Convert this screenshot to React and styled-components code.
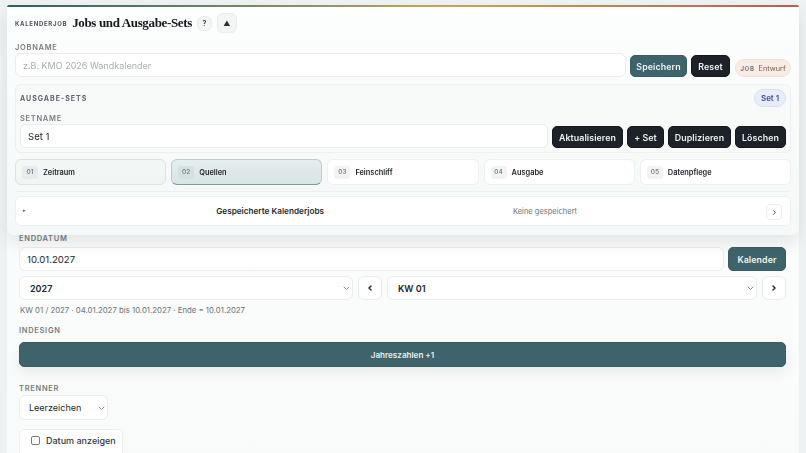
import React from "react";
import styled, { createGlobalStyle } from "styled-components";

const GlobalStyle = createGlobalStyle`
  * { box-sizing: border-box; }
  html, body { margin: 0; height: 100%; overflow: hidden; }
  body {
    background: #eff2f2;
    font-family: Inter, "Liberation Sans", sans-serif;
    color: #1c2126;
  }
`;

const Page = styled.div`
  width: 806px;
  height: 453px;
  overflow: hidden;
  padding: 5px 7px 0;
`;

const Card = styled.div`
  height: 448px;
  background: linear-gradient(180deg, #fdfefe 0%, #f9fafa 100%);
`;

const Panel = styled.header`
  position: sticky;
  top: 0;
  z-index: 2;
  height: 230px;
  padding: 8px 8px 0;
  background: linear-gradient(180deg, #fdfefe 0%, #f5f8f8 100%);
  border-top: 2px solid transparent;
  border-radius: 6px 6px 8px 8px;
  box-shadow: 0 8px 16px rgba(30, 45, 50, 0.1);
  &::before {
    content: "";
    position: absolute;
    top: -2px;
    left: 0;
    right: 0;
    height: 2px;
    border-radius: 2px 2px 0 0;
    background: linear-gradient(90deg, #2f5e66 0%, #8f9468 40%, #c9a45c 55%, #a9654f 100%);
  }
`;

const TitleRow = styled.div`
  display: flex;
  align-items: center;
  height: 20px;
  margin-top: -2px;
`;

const Eyebrow = styled.span`
  font-size: 6px;
  font-weight: 700;
  letter-spacing: 0.7px;
  color: #4a545b;
  margin-right: 5px;
`;

const Title = styled.h1`
  margin: 0 5px 0 0;
  font-family: "Liberation Serif", serif;
  font-size: 13px;
  font-weight: 700;
  letter-spacing: -0.35px;
  color: #14181c;
`;

const IconBtn = styled.button`
  display: flex;
  align-items: center;
  justify-content: center;
  width: ${(p) => p.$w}px;
  height: ${(p) => p.$h}px;
  margin-right: ${(p) => p.$mr || 0}px;
  padding: 0;
  flex: none;
  font-family: inherit;
  font-size: ${(p) => p.$fs || 8}px;
  font-weight: 600;
  color: #2a3036;
  background: ${(p) => p.$bg || "#f4f6f6"};
  border: 1px solid #e9ecec;
  border-radius: 6px;
`;

const FieldLabel = styled.div`
  font-size: 7.5px;
  font-weight: 600;
  letter-spacing: 0.7px;
  line-height: 9px;
  color: #767c81;
  margin-top: ${(p) => p.$mt || 0}px;
  margin-bottom: ${(p) => p.$mb ?? 3}px;
`;

const Row = styled.div`
  display: flex;
  align-items: ${(p) => p.$align || "flex-end"};
  gap: ${(p) => p.$gap || 4}px;
  margin-top: ${(p) => p.$mt || 0}px;
`;

const TextInput = styled.input`
  flex: 1;
  min-width: 0;
  height: 24px;
  padding: 0 7px;
  font-family: inherit;
  font-size: 9.6px;
  color: #22272c;
  background: #fff;
  border: 1px solid #eaeded;
  border-radius: 6px;
  outline: none;
  &::placeholder { color: #a8adb2; font-size: 9px; }
`;

const Button = styled.button`
  flex: none;
  width: ${(p) => p.$w}px;
  height: ${(p) => p.$h || 22}px;
  padding: 0;
  font-family: inherit;
  font-size: 8.8px;
  font-weight: 600;
  letter-spacing: 0.1px;
  color: #eef3f3;
  background: ${(p) => (p.$dark ? "#1c2228" : "#3e636a")};
  border: 1px solid ${(p) => (p.$dark ? "#15191d" : "#3a5d63")};
  border-radius: 5px;
`;

const JobPill = styled.div`
  display: flex;
  flex: none;
  align-items: center;
  justify-content: center;
  gap: 4px;
  width: 56px;
  height: 18px;
  margin-left: 1px;
  font-size: 7.3px;
  color: #7b5a4b;
  background: #f8ece4;
  border: 1px solid #f1e2d8;
  border-radius: 9px;
`;

const JobTag = styled.span`
  font-size: 6px;
  font-weight: 700;
  letter-spacing: 0.7px;
  color: #74797d;
`;

const SetBox = styled.section`
  height: 69px;
  margin-top: 7px;
  padding: 4px 4px 0;
  background: #f8fafa;
  border: 1px solid #edf0f0;
  border-radius: 6px;
`;

const SetHead = styled.div`
  display: flex;
  align-items: center;
  justify-content: space-between;
  height: 18px;
  margin-bottom: 7px;
`;

const SetTitle = styled.div`
  font-size: 7px;
  font-weight: 700;
  letter-spacing: 1px;
  color: #5d646a;
`;

const SetPill = styled.div`
  display: flex;
  align-items: center;
  justify-content: center;
  width: 32px;
  height: 18px;
  font-size: 8px;
  font-weight: 600;
  color: #3c4fa0;
  background: #e7edf9;
  border: 1px solid #d9e1f1;
  border-radius: 9px;
`;

const Tabs = styled.nav`
  display: grid;
  grid-template-columns: repeat(5, 1fr);
  gap: 5px;
  margin-top: 6px;
  padding-bottom: 6px;
  border-bottom: 1px solid #edf0f0;
`;

const Tab = styled.div`
  display: flex;
  align-items: center;
  gap: 5px;
  height: 26px;
  padding: 0 6px;
  font-size: 7.4px;
  font-weight: 600;
  color: #24292e;
  background: ${(p) =>
    p.$active
      ? "linear-gradient(180deg, #e6eeee, #d8e4e5)"
      : p.$soft
      ? "linear-gradient(180deg, #f3f7f6, #f1f6f5)"
      : "#fff"};
  border: 1px solid ${(p) => (p.$active ? "#bccccd" : p.$soft ? "#d9e3e2" : "#eef0f0")};
  border-bottom: ${(p) => (p.$active ? "1.5px solid #7f999c" : undefined)};
  border-radius: 6px;
`;

const TabNum = styled.span`
  display: flex;
  align-items: center;
  justify-content: center;
  width: 16px;
  height: 13px;
  font-size: 6.5px;
  font-weight: 500;
  color: #6d7378;
  background: ${(p) => (p.$active ? "#d5e0e1" : p.$soft ? "#e6ecec" : "#f2f4f4")};
  border-radius: 3px;
`;

const SavedRow = styled.div`
  display: grid;
  grid-template-columns: 1fr 1fr;
  align-items: center;
  position: relative;
  height: 30px;
  margin-top: 4px;
  background: #fff;
  border: 1px solid #eef0f0;
  border-radius: 6px;
`;

const SavedTitle = styled.div`
  font-size: 8.2px;
  font-weight: 600;
  text-align: right;
  color: #24292e;
  padding-right: 79px;
`;

const SavedNote = styled.div`
  font-size: 7.5px;
  color: #6f757a;
  padding-left: 110px;
`;

const Caret = styled.span`
  position: absolute;
  left: 7px;
  top: 10px;
  font-size: 5px;
  color: #555;
`;

const SavedBtn = styled.div`
  position: absolute;
  right: 8px;
  top: 7px;
  width: 16px;
  height: 16px;
  display: flex;
  align-items: center;
  justify-content: center;
  background: #fdfefe;
  border: 1px solid #eef0f0;
  border-radius: 4px;
`;

const Content = styled.main`
  padding: 0 13px 0 12px;
`;

const SelectWrap = styled.div`
  position: relative;
  flex: ${(p) => (p.$w ? "none" : 1)};
  width: ${(p) => (p.$w ? `${p.$w}px` : "auto")};
`;

const Select = styled.select`
  appearance: none;
  display: block;
  width: 100%;
  height: ${(p) => p.$h || 24}px;
  padding: 0 0 0 ${(p) => p.$pl || 10}px;
  font-family: inherit;
  font-size: ${(p) => p.$fs || 9}px;
  font-weight: ${(p) => p.$weight || 600};
  color: #22272c;
  background: #fff;
  border: 1px solid #eaeded;
  border-radius: 6px;
  outline: none;
`;

const Chevron = styled.svg`
  position: absolute;
  right: 3px;
  top: 50%;
  margin-top: -3px;
  width: 7px;
  height: 6px;
  pointer-events: none;
`;

const PageBtn = styled.button`
  display: flex;
  flex: none;
  align-items: center;
  justify-content: center;
  width: 24px;
  height: 24px;
  padding: 0;
  background: #fff;
  border: 1px solid #eaeded;
  border-radius: 6px;
`;

const Hint = styled.div`
  margin-top: 5px;
  padding-left: 1px;
  font-size: 7.8px;
  line-height: 11px;
  color: #6c7277;
`;

const WideButton = styled.button`
  display: block;
  width: 100%;
  height: 25px;
  padding: 0;
  font-family: inherit;
  font-size: 8.1px;
  font-weight: 600;
  color: #eaf0f0;
  background: #3e636a;
  border: 1px solid #3a5d63;
  border-radius: 5px;
  box-shadow: 0 6px 12px rgba(40, 70, 75, 0.08);
`;

const CheckCard = styled.label`
  display: flex;
  align-items: center;
  gap: 6px;
  width: 104px;
  height: 30px;
  margin-top: 9px;
  padding: 0 0 7px 11px;
  font-size: 9px;
  font-weight: 500;
  color: #33393e;
  background: #fff;
  border: 1px solid #eef0f0;
  border-radius: 6px;
`;

const Box = styled.input`
  appearance: none;
  width: 9px;
  height: 9px;
  margin: 0;
  background: #fff;
  border: 1px solid #777d82;
  border-radius: 2px;
`;

const Arrow = ({ dir, size = 8, color = "#2a3036", width = 1.6 }) => (
  <svg width={size} height={size} viewBox="0 0 8 8" fill="none">
    <path
      d={dir === "left" ? "M5 2 3 4l2 2" : "M3 2l2 2-2 2"}
      stroke={color}
      strokeWidth={width}
      strokeLinecap="round"
      strokeLinejoin="round"
    />
  </svg>
);

const Down = () => (
  <Chevron viewBox="0 0 7 6" fill="none">
    <path d="M1 2l2.5 2.5L6 2" stroke="#7a8085" strokeWidth="0.9" strokeLinecap="round" />
  </Chevron>
);

const Dropdown = ({ value, w, h, pl, weight, fs }) => (
  <SelectWrap $w={w}>
    <Select $h={h} $pl={pl} $weight={weight} $fs={fs} defaultValue={value}>
      <option>{value}</option>
    </Select>
    <Down />
  </SelectWrap>
);

const tabs = [
  ["01", "Zeitraum"],
  ["02", "Quellen"],
  ["03", "Feinschliff"],
  ["04", "Ausgabe"],
  ["05", "Datenpflege"],
];

export default function App() {
  return (
    <Page>
      <GlobalStyle />
      <Card>
        <Panel>
          <TitleRow>
            <Eyebrow>KALENDERJOB</Eyebrow>
            <Title>Jobs und Ausgabe-Sets</Title>
            <IconBtn $w={15} $h={15} $mr={5} $fs={7}>?</IconBtn>
            <IconBtn $w={20} $h={20} $fs={7}>▲</IconBtn>
          </TitleRow>
          <FieldLabel $mt={10} $mb={1}>JOBNAME</FieldLabel>
          <Row>
            <TextInput placeholder="z.B. KMO 2026 Wandkalender" />
            <Button $w={57}>Speichern</Button>
            <Button $dark $w={39}>Reset</Button>
            <JobPill>
              <JobTag>JOB</JobTag> Entwurf
            </JobPill>
          </Row>
          <SetBox>
            <SetHead>
              <SetTitle>AUSGABE-SETS</SetTitle>
              <SetPill>Set 1</SetPill>
            </SetHead>
            <FieldLabel $mb={1}>SETNAME</FieldLabel>
            <Row>
              <TextInput defaultValue="Set 1" />
              <Button $dark $w={71}>Aktualisieren</Button>
              <Button $dark $w={37}>+ Set</Button>
              <Button $dark $w={63}>Duplizieren</Button>
              <Button $dark $w={51}>Löschen</Button>
            </Row>
          </SetBox>
          <Tabs>
            {tabs.map(([num, label], i) => (
              <Tab key={num} $soft={i === 0} $active={i === 1}>
                <TabNum $active={i === 1} $soft={i === 0}>{num}</TabNum>
                {label}
              </Tab>
            ))}
          </Tabs>
          <SavedRow>
            <Caret>▸</Caret>
            <SavedTitle>Gespeicherte Kalenderjobs</SavedTitle>
            <SavedNote>Keine gespeichert</SavedNote>
            <SavedBtn>
              <Arrow dir="right" size={7} width={1} />
            </SavedBtn>
          </SavedRow>
        </Panel>
        <Content>
          <FieldLabel $mt={-1} $mb={4}>ENDDATUM</FieldLabel>
          <Row $align="center">
            <TextInput defaultValue="10.01.2027" />
            <Button $w={58} $h={24}>Kalender</Button>
          </Row>
          <Row $align="center" $mt={5} $gap={5}>
            <Dropdown value="2027" w={334} />
            <PageBtn><Arrow dir="left" /></PageBtn>
            <Dropdown value="KW 01" />
            <PageBtn><Arrow dir="right" /></PageBtn>
          </Row>
          <Hint>KW 01 / 2027 · 04.01.2027 bis 10.01.2027 · Ende = 10.01.2027</Hint>
          <FieldLabel $mt={10} $mb={7}>INDESIGN</FieldLabel>
          <WideButton>Jahreszahlen +1</WideButton>
          <FieldLabel $mt={17} $mb={2}>TRENNER</FieldLabel>
          <Dropdown value="Leerzeichen" w={89} h={25} pl={9} weight={400} />
          <CheckCard>
            <Box type="checkbox" />
            Datum anzeigen
          </CheckCard>
        </Content>
      </Card>
    </Page>
  );
}
